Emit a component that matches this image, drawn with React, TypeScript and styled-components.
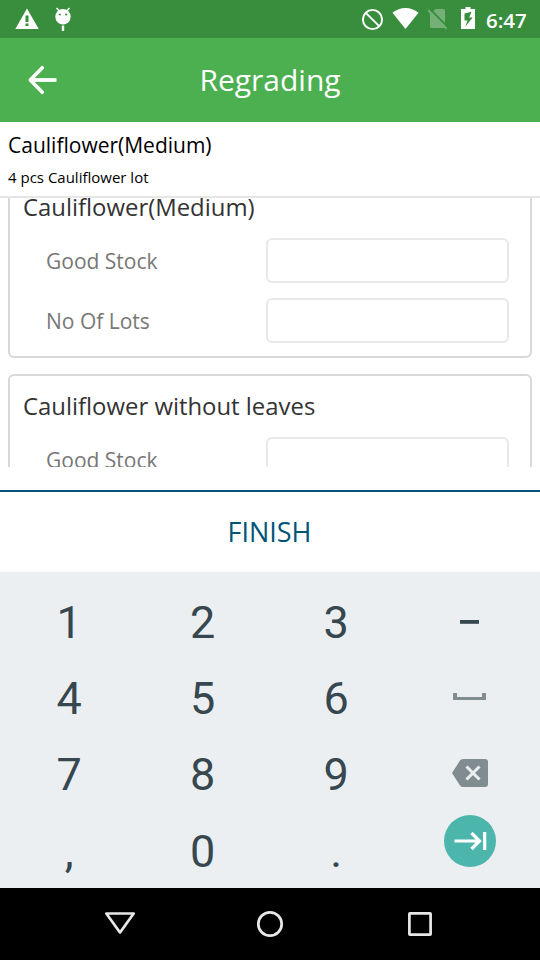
import React from "react";
import styled, { createGlobalStyle } from "styled-components";

const GlobalStyle = createGlobalStyle`
  *, *::before, *::after { box-sizing: border-box; }
  html, body { margin: 0; padding: 0; background: #fff; }
  button { border: 0; padding: 0; background: none; font: inherit; color: inherit; }
  svg { display: block; flex: none; }
`;

const Screen = styled.div`
  display: flex;
  flex-direction: column;
  width: 540px;
  height: 960px;
  overflow: hidden;
  background: #fff;
  font-family: "Open Sans", "Noto Sans", sans-serif;
`;

const StatusBar = styled.header`
  display: flex;
  justify-content: space-between;
  flex: none;
  height: 38px;
  background: #388e3c;
  color: #fff;
`;

const StatusGroup = styled.div<{ $end?: boolean }>`
  display: flex;
  align-items: center;
  gap: ${(p) => (p.$end ? 10 : 15)}px;
  padding: ${(p) => (p.$end ? "0 12px 0 0" : "0 0 0 15px")};
`;

const Clock = styled.time`
  width: 42px;
  padding-top: 1px;
  font-size: 20.5px;
  font-weight: 600;
  line-height: 38px;
  white-space: nowrap;
`;

const AppBar = styled.div`
  display: grid;
  grid-template-columns: 84px 1fr 84px;
  align-items: center;
  flex: none;
  height: 84px;
  background: #4caf50;
  color: #fff;
`;

const BackButton = styled.button`
  display: flex;
  justify-content: center;
`;

const AppTitle = styled.h1`
  margin: 0;
  font-size: 30px;
  font-weight: 400;
  line-height: 40px;
  text-align: center;
`;

const Summary = styled.section`
  flex: none;
  height: 76px;
  padding: 8px 8px 0;
  border-bottom: 2px solid #e6e6e6;
  color: #000;
`;

const LotName = styled.h2`
  margin: 0;
  font-size: 21px;
  font-weight: 400;
  line-height: 30px;
`;

const LotInfo = styled.p`
  margin: 6px 0 0;
  font-size: 15px;
  line-height: 22px;
`;

const ScrollArea = styled.main`
  flex: none;
  height: 269px;
  overflow: hidden;
`;

const GradeList = styled.div`
  display: flex;
  flex-direction: column;
  gap: 16px;
  margin-top: -23px;
  padding: 0 8px;
`;

const GradeCard = styled.section`
  flex: none;
  height: 183px;
  padding: 12px 21px 0 13px;
  border: 2px solid #d8d8d8;
  border-radius: 6px;
`;

const GradeTitle = styled.h3`
  height: 34px;
  margin: 0 0 15px;
  color: #333;
  font-size: 23.9px;
  font-weight: 400;
  line-height: 36px;
  white-space: nowrap;
`;

const Field = styled.label`
  display: flex;
  align-items: center;
  justify-content: space-between;
  height: 45px;
  margin-bottom: 15px;
  padding-left: 23px;
  color: #777;
  font-size: 21px;
`;

const Input = styled.input`
  width: 243px;
  height: 45px;
  padding: 0 10px;
  border: 2px solid #e8e8e8;
  border-radius: 6px;
  background: #fff;
  font: inherit;
  outline: 0;
`;

const FinishButton = styled.button`
  flex: none;
  height: 82px;
  margin-top: 23px;
  padding-right: 1px;
  border-top: 2px solid #005577;
  background: #fff;
  color: #005577;
  font-size: 27px;
  line-height: 80px;
  text-align: center;
`;

const Keyboard = styled.div`
  display: grid;
  grid-template-columns: repeat(4, 133.5px);
  grid-template-rows: repeat(4, 76.3px);
  flex: none;
  height: 316px;
  padding: 12px 2.5px 0;
  background: #eceff1;
  box-shadow: 0 -1px 2px rgba(0, 0, 0, 0.04);
  color: #37474f;
  font-family: Roboto, sans-serif;
  font-size: 45px;
`;

const Key = styled.button<{ $lift?: number }>`
  display: flex;
  align-items: center;
  justify-content: center;
  padding-bottom: ${(p) => (p.$lift || 0) * 2}px;
`;

const NavBar = styled.nav`
  display: flex;
  justify-content: center;
  align-items: center;
  gap: 114px;
  flex: none;
  height: 72px;
  background: #000;
`;

const WarningIcon = () => (
  <svg width="24" height="22" viewBox="0 0 24 22">
    <path d="M12 .5 23.7 21H.3Z" fill="#fff" />
    <path d="M10.5 7.500h3v6.500h-3zM10.500 15.500h3v2.500h-3z" fill="#388e3c" />
  </svg>
);

const DebugIcon = () => (
  <svg width="18" height="24" viewBox="0 0 18 24">
    <circle cx="9" cy="9.7" r="7.7" fill="#fff" />
    <path d="m2.500 1 3 3M15.500 1l-3 3" stroke="#fff" strokeWidth="1.5" />
    <path d="M9 18.500v5.500" stroke="#fff" strokeWidth="2.4" />
    <circle cx="5.8" cy="7.5" r="1.1" fill="#388e3c" />
    <circle cx="12.2" cy="7.5" r="1.1" fill="#388e3c" />
  </svg>
);

const SystemIcons = () => (
  <svg width="116" height="38" viewBox="360 0 116 38">
    <circle cx="372.5" cy="19.500" r="9.600" fill="none" stroke="#fff" strokeWidth="1.9" />
    <path d="m365.800 12.800 13.400 13.400" stroke="#fff" strokeWidth="1.9" />
    <path d="M392.500 12.800C400 6.500 411 6.500 418.500 12.800L405.500 29Z" fill="#fff" />
    <path d="M435.500 9h8q1.500 0 1.500 1.500v16q0 1.500-1.500 1.500h-12q-1.500 0-1.500-1.500v-12Z" fill="#74b077" />
    <path d="m429.500 8.500 18 18.500" stroke="#388e3c" strokeWidth="1.800" />
    <path d="m428.200 10.200 18.300 18.500" stroke="#74b077" strokeWidth="2" />
    <path d="M465.500 7h5v2h4.500v20h-14V9h4.500Z" fill="#fff" />
    <path d="M471.500 11.800 464.500 13.500v7h3l-2.300 6.200 7.500-9.200h-3.500Z" fill="#388e3c" />
  </svg>
);

const BackArrow = () => (
  <svg width="32" height="32" viewBox="0 0 32 32">
    <path d="M30.500 16H4" stroke="#fff" strokeWidth="3.800" />
    <path d="M16.300 3.700 4.300 16l12 12.300" fill="none" stroke="#fff" strokeWidth="3.600" strokeLinecap="round" strokeLinejoin="round" transform="translate(0 0)" />
  </svg>
);

const SpaceIcon = () => (
  <svg width="33" height="7" viewBox="0 0 33 7">
    <path d="M0 0h4v4h25V0h4v7H0Z" fill="#808c90" />
  </svg>
);

const DeleteIcon = () => (
  <svg width="36" height="28" viewBox="0 0 36 28">
    <path d="M11 0h22q3 0 3 3v22q0 3-3 3H11q-2 0-3-1.600L0 14 8 1.600Q9 0 11 0Z" fill="#808c90" />
    <path d="m14.500 7.500 13 13m0-13-13 13" stroke="#eceff1" strokeWidth="3" />
  </svg>
);

const NextIcon = () => (
  <svg width="52" height="52" viewBox="0 0 52 52">
    <circle cx="26" cy="26" r="26" fill="#4db6ac" />
    <path d="M10.500 26H35M27.500 18l8 8-8 8M40.700 17v18" fill="none" stroke="#fff" strokeWidth="3.200" />
  </svg>
);

const MinusIcon = () => (
  <svg width="19" height="4" viewBox="0 0 19 4">
    <path d="M0 0h19v3.800H0Z" fill="#37474f" />
  </svg>
);

const keys: { id: string; face: React.ReactNode; lift?: number }[] = [
  { id: "1", face: "1" },
  { id: "2", face: "2" },
  { id: "3", face: "3" },
  { id: "minus", face: <MinusIcon /> },
  { id: "4", face: "4" },
  { id: "5", face: "5" },
  { id: "6", face: "6" },
  { id: "space", face: <SpaceIcon />, lift: 2 },
  { id: "7", face: "7" },
  { id: "8", face: "8" },
  { id: "9", face: "9" },
  { id: "delete", face: <DeleteIcon />, lift: 2 },
  { id: "comma", face: "," },
  { id: "0", face: "0" },
  { id: "period", face: "." },
  { id: "next", face: <NextIcon />, lift: 10 },
];

const grades = ["Cauliflower(Medium)", "Cauliflower without leaves"];

export default function App() {
  return (
    <Screen>
      <GlobalStyle />
      <StatusBar>
        <StatusGroup>
          <WarningIcon />
          <DebugIcon />
        </StatusGroup>
        <StatusGroup $end>
          <SystemIcons />
          <Clock>6:47</Clock>
        </StatusGroup>
      </StatusBar>
      <AppBar>
        <BackButton aria-label="Back"><BackArrow /></BackButton>
        <AppTitle>Regrading</AppTitle>
      </AppBar>
      <Summary>
        <LotName>Cauliflower(Medium)</LotName>
        <LotInfo>4 pcs Cauliflower lot</LotInfo>
      </Summary>
      <ScrollArea>
        <GradeList>
          {grades.map((name) => (
            <GradeCard key={name}>
              <GradeTitle>{name}</GradeTitle>
              <Field>Good Stock<Input /></Field>
              <Field>No Of Lots<Input /></Field>
            </GradeCard>
          ))}
        </GradeList>
      </ScrollArea>
      <FinishButton>FINISH</FinishButton>
      <Keyboard>
        {keys.map((k) => (
          <Key key={k.id} aria-label={k.id} $lift={k.lift}>{k.face}</Key>
        ))}
      </Keyboard>
      <NavBar>
        <svg width="36" height="28" viewBox="0 0 36 28">
          <path d="M4.300 3.500h27.400L18 22.500Z" fill="none" stroke="#e8e8e8" strokeWidth="2.700" strokeLinejoin="round" />
        </svg>
        <svg width="36" height="28" viewBox="0 0 36 28">
          <circle cx="18" cy="14" r="11.700" fill="none" stroke="#e8e8e8" strokeWidth="2.700" />
        </svg>
        <svg width="36" height="28" viewBox="0 0 36 28">
          <rect x="7.400" y="3.400" width="21.200" height="21.200" rx="0.500" fill="none" stroke="#e8e8e8" strokeWidth="2.700" />
        </svg>
      </NavBar>
    </Screen>
  );
}
